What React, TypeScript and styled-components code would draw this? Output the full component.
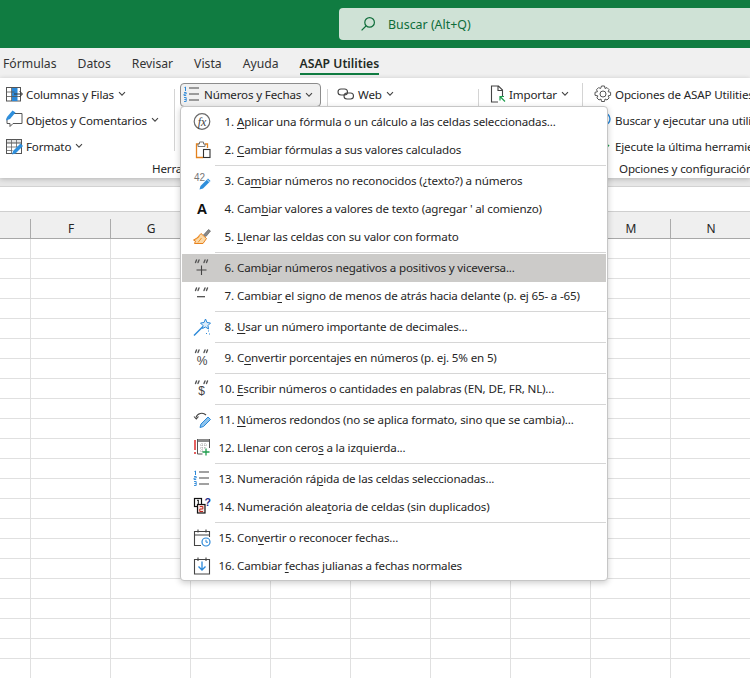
import React from 'react';
import styled, { createGlobalStyle } from 'styled-components';

const GlobalStyle = createGlobalStyle`
  html, body {
    margin: 0;
    padding: 0;
    background: #fff;
  }
`;

const FONT = `"Noto Sans", "Open Sans", "Liberation Sans", sans-serif`;

const Page = styled.div`
  position: relative;
  width: 750px;
  height: 678px;
  overflow: hidden;
  background: #fff;
  font-family: ${FONT};
  font-size: 11.6px;
  letter-spacing: -0.16px;
  color: #262626;
`;

const TitleBar = styled.div`
  height: 48px;
  background: #107c41;
  display: flex;
  align-items: center;
  padding-left: 339px;
`;

const SearchBox = styled.div`
  flex: 1;
  height: 32px;
  background: #cfe2d6;
  border-radius: 4px 0 0 4px;
  display: flex;
  align-items: center;
  gap: 12px;
  padding-left: 21px;
  font-size: 12.4px;
  letter-spacing: 0;
  color: #0e6d3a;
`;

const TabBar = styled.div`
  height: 30px;
  background: #f0f0f0;
  display: flex;
  align-items: center;
  padding-left: 3px;
  gap: 21px;
  font-size: 12.2px;
  letter-spacing: 0;
  color: #333;
`;

const Tab = styled.div<{ $active?: boolean }>`
  position: relative;
  font-weight: ${p => (p.$active ? 600 : 400)};
  color: ${p => (p.$active ? '#1f2a24' : '#333')};
  &::after {
    content: '';
    display: ${p => (p.$active ? 'block' : 'none')};
    position: absolute;
    left: 0;
    right: 0;
    bottom: -3px;
    height: 2px;
    background: #107c41;
  }
`;

const Ribbon = styled.div`
  position: relative;
  z-index: 1;
  height: 100px;
  background: #fff;
  display: flex;
  overflow: hidden;
  box-shadow: 0 1px 5px rgba(0, 0, 0, 0.22);
`;

const Group = styled.div<{ $width: number }>`
  width: ${p => p.$width}px;
  flex: none;
  display: flex;
  flex-direction: column;
`;

const GroupBody = styled.div`
  height: 80px;
  display: flex;
`;

const GroupLabel = styled.div<{ $left: number }>`
  padding: 1px 0 0 ${p => p.$left}px;
  line-height: 19px;
  white-space: nowrap;
`;

const Column = styled.div<{ $width: number; $pad: number }>`
  width: ${p => p.$width}px;
  flex: none;
  padding: 3px 0 0 ${p => p.$pad}px;
  box-sizing: border-box;
`;

const Divider = styled.div<{ $top: number }>`
  width: 1px;
  flex: none;
  background: #d4d4d4;
  margin-top: ${p => p.$top}px;
  height: 62px;
`;

const RibbonButton = styled.div`
  height: 26px;
  display: flex;
  align-items: center;
  gap: 2px;
  white-space: nowrap;
`;

const ActiveButton = styled(RibbonButton)`
  width: 141px;
  height: 24px;
  margin: 2px 0 0;
  padding: 0 0 1px 1px;
  box-sizing: border-box;
  background: #f0f0f0;
  border: 1px solid #8c8c8c;
  border-radius: 4px;
`;

const ChevronIcon = styled.svg`
  flex: none;
  margin-left: 2px;
`;

const FormulaStrip = styled.div`
  height: 8px;
  background: #e6e6e6;
  border-bottom: 1px solid #d2d2d2;
`;

const FormulaBar = styled.div`
  height: 24px;
  background: #fff;
  border-bottom: 1px solid #cfcfcf;
`;

const HeaderRow = styled.div`
  height: 26px;
  background: #efefef;
  border-bottom: 1px solid #a8a8a8;
  display: flex;
`;

const HeaderCell = styled.div<{ $width: number }>`
  width: ${p => p.$width}px;
  flex: none;
  box-sizing: border-box;
  display: flex;
  align-items: center;
  justify-content: center;
  position: relative;
  padding-top: 7px;
  font-size: 12px;
  letter-spacing: 0;
  &::after {
    content: '';
    position: absolute;
    right: 0;
    top: 7px;
    bottom: 0;
    width: 1px;
    background: #ababab;
  }
`;

const SheetRow = styled.div`
  display: flex;
  height: 20px;
`;

const SheetCell = styled.div<{ $width: number }>`
  width: ${p => p.$width}px;
  flex: none;
  box-sizing: border-box;
  border-right: 1px solid #e0e0e0;
  border-bottom: 1px solid #e0e0e0;
`;

const Menu = styled.div`
  position: absolute;
  z-index: 2;
  left: 180px;
  top: 106px;
  width: 428px;
  box-sizing: border-box;
  background: #fff;
  border: 1px solid #c6c6c6;
  border-radius: 4px;
  padding: 1px 1px 0;
  box-shadow: 0 2px 6px rgba(0, 0, 0, 0.2);
`;

const MenuRow = styled.div<{ $active?: boolean }>`
  height: 28px;
  display: flex;
  align-items: center;
  background: ${p => (p.$active ? '#cccbc9' : 'transparent')};
  white-space: nowrap;
`;

const MenuIcon = styled.div`
  width: 40px;
  flex: none;
  display: flex;
  justify-content: center;
  align-items: center;
`;

const MenuText = styled.span`
  padding-bottom: 2px;
`;

const MenuNumber = styled.span`
  display: inline-block;
  width: 15.5px;
  margin-left: -3.5px;
  margin-right: 3px;
  text-align: right;
`;

const MenuSeparator = styled.div`
  height: 1px;
  margin: 1px 0 1px 33px;
  background: #d6d6d6;
`;

const Key = styled.u`
  text-underline-offset: 2px;
  text-decoration-thickness: 1px;
`;

type IconProps = { children: React.ReactNode; size?: number };

const Svg = ({ children, size = 20 }: IconProps) => (
  <svg width={size} height={size} viewBox="0 0 20 20" fill="none" style={{ flex: 'none', letterSpacing: 0 }}>
    {children}
  </svg>
);

const Chevron = () => (
  <ChevronIcon width="8" height="6" viewBox="0 0 8 6" fill="none">
    <path d="M1 1.200 4 4.200 7 1.200" stroke="#444" strokeWidth="1.100" />
  </ChevronIcon>
);

// the curly quote marks above the +, -, % and $ icons
const QuoteMarks = () => (
  <path
    d="M4.500 2 3.500 4.500M7 2 6 4.500M13 2 12 4.500M15.500 2 14.500 4.500"
    stroke="#555"
    strokeWidth="1.400"
    strokeLinecap="round"
  />
);

const NumberedList = () => (
  <Svg>
    <path d="M2.500 2.500 3.500 2v4" stroke="#2b88d8" strokeWidth="1" />
    <path d="M2 7.500h2.200v1.500H2v1.500h2.200M2 12.500h2.200v4H2M2.300 14.500h1.900" stroke="#2b88d8" strokeWidth=".9" />
    <path d="M7 3h10M7 9h10M7 15h10" stroke="#444" strokeWidth="1.100" />
  </Svg>
);

const iconSet: React.ReactNode[] = [
  <Svg key="1">
    <circle cx="10" cy="9.500" r="7.800" stroke="#6a6a6a" strokeWidth="1.200" />
    <text x="10" y="13.500" fontSize="12" fontStyle="italic" textAnchor="middle" fill="#444" fontFamily="Liberation Serif">
      fx
    </text>
  </Svg>,
  <Svg key="2">
    <path d="M7 4H4.500v13.500H11M13 4h2.500v4" stroke="#e4821e" strokeWidth="1.300" />
    <path d="M7.500 4V2h4v2H13v2.500H6V4z" stroke="#777" strokeWidth="1" fill="#fff" />
    <rect x="11.500" y="9.500" width="6.500" height="8" stroke="#333" strokeWidth="1.100" fill="#fff" />
  </Svg>,
  <Svg key="3">
    <text x="2" y="10" fontSize="10" fill="#777" fontFamily="Liberation Sans">42</text>
    <path d="M7.500 18.500 8.500 15 16 7.500 18.500 10 11 17.500z" fill="#2f8fdc" />
    <path d="M15 8.500 17.500 11" stroke="#fff" strokeWidth=".8" />
  </Svg>,
  <Svg key="4">
    <text x="10" y="15" fontSize="14.500" fontWeight="700" textAnchor="middle" fill="#111" fontFamily="Liberation Sans">A</text>
  </Svg>,
  <Svg key="5">
    <path d="M11.500 8 16.500 2.500 18.500 4 14 9.500z" fill="#8a8a8a" stroke="#555" strokeWidth=".6" />
    <path d="M9 6.500 14.500 11.500 11 16.500H2.500L3.500 14 1.500 13 5 11z" fill="#fbd9a8" stroke="#e8821e" strokeWidth="1" />
    <path d="M6 15.500 9.500 11M3.500 12.500 7.500 9.500" stroke="#f0962e" strokeWidth="1" />
  </Svg>,
  <Svg key="6">
    <QuoteMarks />
    <path d="M9.500 7.500v9.500M4.500 12h10" stroke="#444" strokeWidth="1.100" />
  </Svg>,
  <Svg key="7">
    <QuoteMarks />
    <path d="M5 10.700h8" stroke="#444" strokeWidth="1.200" />
  </Svg>,
  <Svg key="8">
    <path d="M2 18.500 11 9.500" stroke="#2b88d8" strokeWidth="1.400" />
    <path d="M13.500 2 15 5.500 18.500 6 16 8.500 16.500 12 13.500 10 10.500 11.500 11 8.500 8.500 6 12 5.500z" stroke="#2b88d8" strokeWidth="1" fill="#dcecf9" />
    <path d="M16 14h1M14 16.500h1M17 17h1" stroke="#2b88d8" strokeWidth="1" />
  </Svg>,
  <Svg key="9">
    <QuoteMarks />
    <text x="10" y="17" fontSize="12" textAnchor="middle" fill="#444" fontFamily="Liberation Sans">%</text>
  </Svg>,
  <Svg key="10">
    <QuoteMarks />
    <text x="9.500" y="16" fontSize="12" textAnchor="middle" fill="#444" fontFamily="Liberation Sans">$</text>
  </Svg>,
  <Svg key="11">
    <path d="M4 7.500A6 6 0 0 1 14 5" stroke="#444" strokeWidth="1.100" />
    <path d="M2 6.500 4.300 9 6.500 6.500" stroke="#444" strokeWidth="1.100" />
    <path d="M8 17.500 9 14 16 7 18.500 9.500 11.500 16.500z" fill="#8cc4ee" stroke="#2b88d8" strokeWidth="1" />
  </Svg>,
  <Svg key="12">
    <path d="M3 2v10M3 14v2" stroke="#e03a3a" strokeWidth="1.600" />
    <rect x="5" y="1" width="13" height="3" fill="#8a8a8a" />
    <path d="M5.500 1v15h5M17.500 1v9" stroke="#555" strokeWidth="1" />
    <path d="M8 7h8M8 10h6M8 13h3M10 5v9M13 5v6" stroke="#999" strokeWidth=".8" strokeDasharray="1 1" />
    <path d="M14 10.500v7M10.500 14h7" stroke="#1f9d4d" strokeWidth="1.300" />
  </Svg>,
  <NumberedList key="13" />,
  <Svg key="14">
    <rect x="2.500" y="1.500" width="7" height="8" stroke="#111" strokeWidth="1.200" fill="#fff" />
    <path d="M5 3.500 6.300 3v4.500" stroke="#111" strokeWidth="1" />
    <rect x="5.500" y="7.500" width="7.500" height="8.500" stroke="#111" strokeWidth="1.200" fill="#fbe3e0" />
    <path d="M7.800 9.500h3v2.500h-3v2.500h3.200" stroke="#c0261c" strokeWidth="1" />
    <text x="15.800" y="9" fontSize="10.500" fontWeight="700" textAnchor="middle" fill="#1c2f8f" fontFamily="Liberation Sans">?</text>
  </Svg>,
  <Svg key="15">
    <path d="M9 17.500H2.500V3.500h15V9M2.500 7h15M6 1.500v3M14 1.500v3" stroke="#444" strokeWidth="1.100" />
    <circle cx="14" cy="14" r="4" stroke="#2b88d8" strokeWidth="1.200" fill="#fff" />
    <path d="M14 11.800v2.400h2" stroke="#2b88d8" strokeWidth="1" />
  </Svg>,
  <Svg key="16">
    <path d="M2.500 3.500h15v14.500h-15zM6 1.500v3.500M14 1.500v3.500" stroke="#444" strokeWidth="1.100" />
    <path d="M10 5.500v8M6.500 10.500l3.500 3.500 3.500-3.500" stroke="#2b88d8" strokeWidth="1.300" />
  </Svg>,
];

type MenuItem = { num: string; before: string; access: string; after: string; active?: boolean; rule?: boolean };

const menuItems: MenuItem[] = [
  { num: '1.', before: '', access: 'A', after: 'plicar una fórmula o un cálculo a las celdas seleccionadas...' },
  { num: '2.', before: '', access: 'C', after: 'ambiar fórmulas a sus valores calculados', rule: true },
  { num: '3.', before: 'Ca', access: 'm', after: 'biar números no reconocidos (¿texto?) a números' },
  { num: '4.', before: 'Cam', access: 'b', after: "iar valores a valores de texto (agregar ' al comienzo)" },
  { num: '5.', before: '', access: 'L', after: 'lenar las celdas con su valor con formato', rule: true },
  { num: '6.', before: 'Camb', access: 'i', after: 'ar números negativos a positivos y viceversa...', active: true },
  { num: '7.', before: 'Cambia', access: 'r', after: ' el signo de menos de atrás hacia delante (p. ej 65- a -65)', rule: true },
  { num: '8.', before: '', access: 'U', after: 'sar un número importante de decimales...', rule: true },
  { num: '9.', before: 'C', access: 'o', after: 'nvertir porcentajes en números (p. ej. 5% en 5)', rule: true },
  { num: '10.', before: '', access: 'E', after: 'scribir números o cantidades en palabras (EN, DE, FR, NL)...', rule: true },
  { num: '11.', before: '', access: 'N', after: 'úmeros redondos (no se aplica formato, sino que se cambia)...' },
  { num: '12.', before: 'Llenar con cero', access: 's', after: ' a la izquierda...', rule: true },
  { num: '13.', before: 'Numeración rá', access: 'p', after: 'ida de las celdas seleccionadas...' },
  { num: '14.', before: 'Numeración alea', access: 't', after: 'oria de celdas (sin duplicados)', rule: true },
  { num: '15.', before: 'Con', access: 'v', after: 'ertir o reconocer fechas...' },
  { num: '16.', before: 'Cambiar ', access: 'f', after: 'echas julianas a fechas normales' },
];

const tabs = ['Fórmulas', 'Datos', 'Revisar', 'Vista', 'Ayuda'];
// H to L sit behind the open menu, so those headers stay empty
const columns = ['', 'F', 'G', '', '', '', '', '', 'M', 'N'];
const rowCount = Array.from({ length: 22 }, (_, i) => i);
const colWidth = (i: number) => (i === 0 ? 31 : 80);

const App: React.FC = () => {
  return (
    <Page>
      <GlobalStyle />
      <TitleBar>
        <SearchBox>
          <Svg size={16}>
            <circle cx="12" cy="8" r="6" stroke="#0e6d3a" strokeWidth="1.500" />
            <path d="M7.500 12.500 2 18" stroke="#0e6d3a" strokeWidth="1.500" />
          </Svg>
          Buscar (Alt+Q)
        </SearchBox>
      </TitleBar>

      <TabBar>
        {tabs.map(t => (
          <Tab key={t}>{t}</Tab>
        ))}
        <Tab $active>ASAP Utilities</Tab>
      </TabBar>

      <Ribbon>
        <Group $width={582}>
          <GroupBody>
            <Column $width={174} $pad={4}>
              <RibbonButton>
                <Svg>
                  <rect x="2.500" y="3.500" width="14" height="13.500" stroke="#555" fill="#fff" />
                  <rect x="8" y="4" width="5.500" height="13" fill="#2b88d8" />
                  <path d="M2.500 8h8M2.500 12.500h14M7.500 3.500v13.500" stroke="#555" strokeWidth=".8" />
                  <path d="M10 10h8M15.500 7l3 3-3 3" stroke="#333" strokeWidth="1" fill="none" />
                </Svg>
                Columnas y Filas <Chevron />
              </RibbonButton>
              <RibbonButton>
                <Svg>
                  <path d="M7 3.500h11v10H9l-3 3v-3H3v-5" stroke="#555" strokeWidth="1" />
                  <path d="M2 10.500 3 7 8.500 0.500 11.500 2.500 6 9z" fill="#2f8fdc" />
                </Svg>
                Objetos y Comentarios <Chevron />
              </RibbonButton>
              <RibbonButton>
                <Svg>
                  <rect x="2.500" y="3.500" width="15" height="14" stroke="#555" fill="#fff" />
                  <rect x="2.500" y="3.500" width="15" height="3.500" fill="#e4e4e4" stroke="#555" />
                  <path d="M7.500 3.500v14M12.500 3.500v8M2.500 11h14M2.500 14.500h6" stroke="#666" strokeWidth=".8" />
                  <path d="M8 18.500 9 15 16.500 7.500 19 10 11.500 17.500z" fill="#2f8fdc" />
                </Svg>
                Formato <Chevron />
              </RibbonButton>
            </Column>
            <Divider $top={11} />
            <Column $width={152} $pad={5}>
              <ActiveButton>
                <NumberedList />
                Números y Fechas <Chevron />
              </ActiveButton>
            </Column>
            <Divider $top={11} />
            <Column $width={150} $pad={8}>
              <RibbonButton>
                <Svg>
                  <rect x="2" y="5" width="9.500" height="6" rx="3" stroke="#444" strokeWidth="1.100" />
                  <rect x="8" y="9" width="9.500" height="6" rx="3" stroke="#444" strokeWidth="1.100" />
                </Svg>
                Web <Chevron />
              </RibbonButton>
            </Column>
            <Divider $top={11} />
            <Column $width={103} $pad={8}>
              <RibbonButton>
                <Svg>
                  <path d="M11 18H4.500V2h7l4 4v6M11 2v4.500h4.500" stroke="#444" strokeWidth="1.100" />
                  <path d="M18 17.500l-4.500-4.500M13 16.500v-4h4" stroke="#1f9d4d" strokeWidth="1.200" />
                </Svg>
                Importar <Chevron />
              </RibbonButton>
            </Column>
          </GroupBody>
          <GroupLabel $left={152}>Herramientas</GroupLabel>
        </Group>
        <Group $width={168}>
          <GroupBody>
            <Divider $top={5} />
            <Column $width={167} $pad={10}>
              <RibbonButton>
                <Svg>
                  <circle cx="10" cy="10" r="3" stroke="#555" />
                  <path
                    d="M8.500 2h3l.5 2.500 2-.9 2.100 2.100-1 2 2.500.6v3l-2.500.6 1 2-2.100 2.100-2-1-.5 2.500h-3l-.5-2.500-2 1-2.100-2.100 1-2L2 11.300v-3l2.500-.6-1-2L5.600 3.600l2 .9z"
                    stroke="#555"
                    strokeWidth="1"
                  />
                </Svg>
                Opciones de ASAP Utilities
              </RibbonButton>
              <RibbonButton>
                <Svg>
                  <circle cx="11" cy="9" r="6" stroke="#2b88d8" strokeWidth="1.400" />
                </Svg>
                Buscar y ejecutar una utilidad
              </RibbonButton>
              <RibbonButton>
                <Svg>
                  <path d="M5 12l4 4 7-7" stroke="#1f9d4d" strokeWidth="1.500" />
                </Svg>
                Ejecute la última herramienta
              </RibbonButton>
            </Column>
          </GroupBody>
          <GroupLabel $left={37}>Opciones y configuración</GroupLabel>
        </Group>
      </Ribbon>

      <FormulaStrip />
      <FormulaBar />

      <HeaderRow>
        {columns.map((c, i) => (
          <HeaderCell key={i} $width={colWidth(i)}>
            {c}
          </HeaderCell>
        ))}
      </HeaderRow>

      {rowCount.map(r => (
        <SheetRow key={r}>
          {columns.map((_, i) => (
            <SheetCell key={i} $width={colWidth(i)} />
          ))}
        </SheetRow>
      ))}

      <Menu>
        {menuItems.map((item, i) => (
          <React.Fragment key={item.num}>
            <MenuRow $active={item.active}>
              <MenuIcon>{iconSet[i]}</MenuIcon>
              <MenuText>
                <MenuNumber>{item.num}</MenuNumber>
                {item.before}
                <Key>{item.access}</Key>
                {item.after}
              </MenuText>
            </MenuRow>
            {item.rule && <MenuSeparator />}
          </React.Fragment>
        ))}
      </Menu>
    </Page>
  );
};

export default App;
